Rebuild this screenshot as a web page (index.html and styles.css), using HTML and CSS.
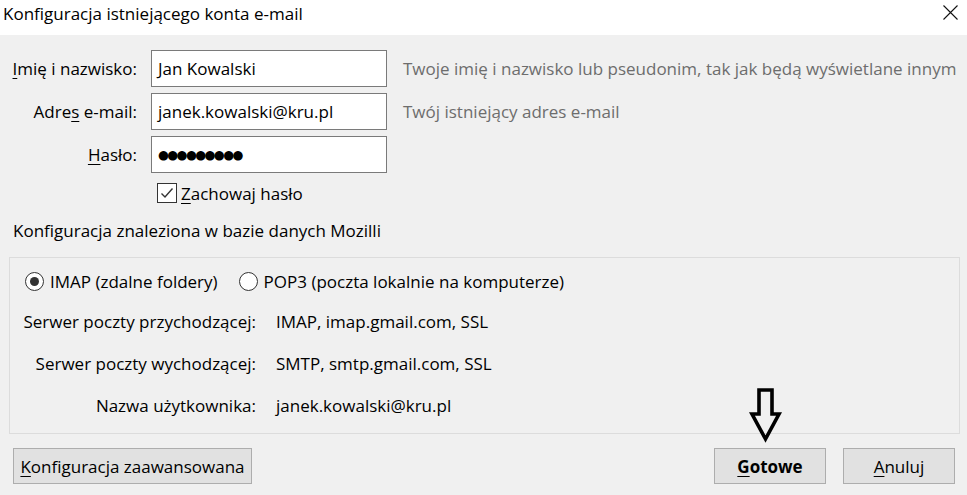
FILE: index.html
```html
<!DOCTYPE html>
<html lang="pl">
<head>
    <meta charset="UTF-8">
    <meta name="viewport" content="width=device-width, initial-scale=1.0">
    <title>Konfiguracja istniejącego konta e-mail</title>
    <link rel="stylesheet" href="styles.css">
</head>
<body>
    <header class="titlebar">
        <span class="title">Konfiguracja istniejącego konta e-mail</span>
        <svg class="close" width="15" height="15" viewBox="0 0 15 15" aria-label="Zamknij">
            <path d="M0.5 0.5 L14.5 14.5 M14.5 0.5 L0.5 14.5" stroke="#111" stroke-width="1.1" fill="none"/>
        </svg>
    </header>

    <main class="content">
        <div class="account">
            <label><u>I</u>mię i nazwisko:</label>
            <div class="field">Jan Kowalski</div>
            <span class="hint">Twoje imię i nazwisko lub pseudonim, tak jak będą wyświetlane innym</span>

            <label>Adre<u>s</u> e-mail:</label>
            <div class="field">janek.kowalski@kru.pl</div>
            <span class="hint">Twój istniejący adres e-mail</span>

            <label><u>H</u>asło:</label>
            <div class="field"><span class="dots">●●●●●●●●●</span></div>
            <span></span>

            <span></span>
            <div class="remember">
                <span class="checkbox">
                    <svg width="18" height="18" viewBox="0 0 18 18">
                        <path d="M3.5 9.5 L7 13 L14.5 4.5" stroke="#333" stroke-width="1.4" fill="none"/>
                    </svg>
                </span>
                <span><u>Z</u>achowaj hasło</span>
            </div>
        </div>

        <p class="found">Konfiguracja znaleziona w bazie danych Mozilli</p>

        <section class="group">
            <div class="protocols">
                <div class="option"><span class="radio checked"></span>IMAP (zdalne foldery)</div>
                <div class="option"><span class="radio"></span>POP3 (poczta lokalnie na komputerze)</div>
            </div>
            <div class="servers">
                <span class="key">Serwer poczty przychodzącej:</span>
                <span>IMAP, imap.gmail.com, SSL</span>
                <span class="key">Serwer poczty wychodzącej:</span>
                <span>SMTP, smtp.gmail.com, SSL</span>
                <span class="key">Nazwa użytkownika:</span>
                <span>janek.kowalski@kru.pl</span>
            </div>
        </section>

        <div class="footer">
            <button class="advanced"><u>K</u>onfiguracja zaawansowana</button>
            <button class="done"><u>G</u>otowe</button>
            <button class="cancel"><u>A</u>nuluj</button>
        </div>
    </main>

    <!-- hand-drawn pointer over the dialog -->
    <svg class="arrow" width="40" height="62" viewBox="0 0 40 62">
        <path d="M11 6 L24 6 L24 30 L31 30 L17.5 55 L4 30 L11 30 Z" stroke="#000" stroke-width="3.6" stroke-linejoin="miter" fill="none"/>
    </svg>
</body>
</html>
```

FILE: styles.css
```css
body {
    margin: 0;
    background-color: #f0f0f0;
    font-family: "Open Sans", "Noto Sans", sans-serif;
    font-size: 17px;
    color: #000;
}
u {
    text-decoration-thickness: 1px;
    text-underline-offset: 3px;
}
.titlebar {
    background-color: #fff;
    height: 35px;
    box-sizing: border-box;
    display: flex;
    justify-content: space-between;
    align-items: flex-start;
    padding: 0 9px 0 3px;
}
.title {
    line-height: 23px;
    padding-top: 2px;
}
.close {
    margin-top: 5px;
}
.content {
    padding-top: 15px;
}
.account {
    display: grid;
    grid-template-columns: 151px 236px 1fr;
    grid-template-rows: 37px 37px 37px 24px;
    row-gap: 6px;
    align-items: center;
}
.account label {
    text-align: right;
    padding-right: 14px;
}
.field {
    height: 37px;
    box-sizing: border-box;
    border: 1px solid #7a7a7a;
    background-color: #fff;
    padding: 0 6px;
    display: flex;
    align-items: center;
}
.dots {
    font-family: "DejaVu Sans", sans-serif;
    font-size: 12.5px;
    letter-spacing: -1.6px;
}
.hint {
    padding-left: 16px;
    color: #6d6d6d;
    white-space: nowrap;
}
.remember {
    grid-column: 2 / 4;
    align-self: end;
    height: 20px;
    padding-left: 6px;
    display: flex;
    align-items: center;
}
.checkbox {
    width: 20px;
    height: 20px;
    box-sizing: border-box;
    border: 1px solid #333;
    background-color: #fff;
    margin-right: 4px;
    display: flex;
}
.found {
    margin: 16px 0 0 13px;
    line-height: 23px;
}
.group {
    margin: 15px 7px 0 9px;
    border: 1px solid #dcdcdc;
    padding: 13px 0 7px 0;
}
.protocols {
    display: flex;
    align-items: center;
    height: 20px;
    padding-left: 15px;
}
.option {
    display: flex;
    align-items: center;
}
.option + .option {
    margin-left: 21px;
}
.radio {
    width: 19px;
    height: 19px;
    box-sizing: border-box;
    border: 1px solid #333;
    border-radius: 50%;
    background-color: #fff;
    margin-right: 6px;
    display: flex;
    align-items: center;
    justify-content: center;
}
.radio.checked::after {
    content: "";
    width: 9px;
    height: 9px;
    border-radius: 50%;
    background-color: #333;
}
.servers {
    display: grid;
    grid-template-columns: 246px 1fr;
    grid-auto-rows: 42px;
    column-gap: 20px;
    align-items: center;
    margin-top: 9px;
}
.key {
    text-align: right;
}
.footer {
    display: flex;
    gap: 17px;
    margin-top: 14px;
    padding: 0 12px 0 13px;
}
.footer button {
    height: 36px;
    border: 1px solid #adadad;
    background-color: #e1e1e1;
    font: inherit;
    color: #000;
    padding: 0;
}
.advanced {
    width: 239px;
    margin-right: auto;
}
.done {
    width: 112px;
    font-weight: bold !important;
}
.cancel {
    width: 112px;
}
.arrow {
    position: absolute;
    left: 748px;
    top: 384px;
}
```
